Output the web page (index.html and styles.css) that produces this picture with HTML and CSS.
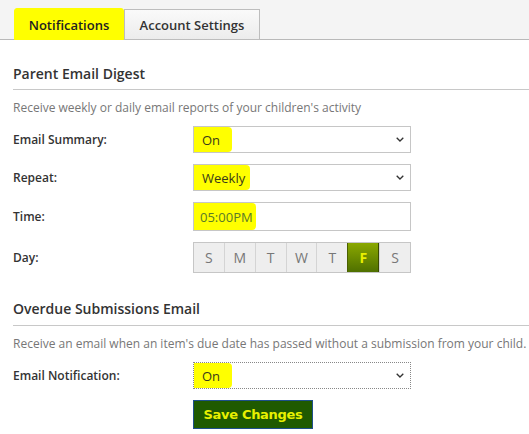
FILE: index.html
```html
<!DOCTYPE html>
<html>
<head>
<meta charset="utf-8">
<link rel="stylesheet" href="styles.css">
</head>
<body>
<div class="tabbar">
  <div class="tab active">Notifications</div>
  <div class="tab">Account Settings</div>
</div>
<div class="content">
  <h2 class="section-title">Parent Email Digest</h2>
  <p class="desc">Receive weekly or daily email reports of your children's activity</p>
  <div class="row">
    <label class="label">Email Summary:</label>
    <div class="select"><span class="hl hl-on">On</span><svg class="chev" viewBox="0 0 8 5" width="8" height="5"><path d="M0.7 0.7 L4 4 L7.3 0.7" fill="none" stroke="#333" stroke-width="1.3"/></svg></div>
  </div>
  <div class="row">
    <label class="label">Repeat:</label>
    <div class="select"><span class="hl hl-weekly">Weekly</span><svg class="chev" viewBox="0 0 8 5" width="8" height="5"><path d="M0.7 0.7 L4 4 L7.3 0.7" fill="none" stroke="#333" stroke-width="1.3"/></svg></div>
  </div>
  <div class="row">
    <label class="label">Time:</label>
    <div class="input"><span class="hl hl-time">05:00PM</span></div>
  </div>
  <div class="row">
    <label class="label">Day:</label>
    <div class="days">
      <span class="day">S</span><span class="day">M</span><span class="day">T</span><span class="day">W</span><span class="day">T</span><span class="day on">F</span><span class="day">S</span>
    </div>
  </div>

  <h2 class="section-title second">Overdue Submissions Email</h2>
  <p class="desc">Receive an email when an item's due date has passed without a submission from your child.</p>
  <div class="row">
    <label class="label">Email Notification:</label>
    <div class="select focus"><span class="hl hl-on">On</span><svg class="chev" viewBox="0 0 8 5" width="8" height="5"><path d="M0.7 0.7 L4 4 L7.3 0.7" fill="none" stroke="#333" stroke-width="1.3"/></svg></div>
  </div>
  <div class="row">
    <span class="label"></span>
    <button class="save">Save Changes</button>
  </div>
</div>
</body>
</html>
```
FILE: styles.css
```css
html, body {
  margin: 0;
  padding: 0;
  background: #fff;
  font-family: "Open Sans", "Noto Sans", sans-serif;
  color: #333;
}
.tabbar {
  height: 39px;
  background: #f4f4f4;
  border-bottom: 1px solid #b9b9b9;
  display: flex;
  align-items: flex-end;
  padding-left: 14px;
}
.tab {
  height: 31px;
  margin-bottom: -1px;
  box-sizing: border-box;
  font-size: 13px;
  font-weight: 600;
  color: #333;
  display: flex;
  align-items: center;
  justify-content: center;
  border: 1px solid #bdbdbd;
  background: linear-gradient(#fafafa, #ececec);
  width: 136px;
}
.tab.active {
  background: #ffff00;
  border-color: #ffff00;
  width: 110px;
  height: 32px;
  border-radius: 3px 3px 0 0;
  color: #222;
  padding-top: 2px;
}
.content {
  padding-left: 13px;
}
.section-title {
  margin: 0;
  font-size: 14px;
  font-weight: 600;
  color: #333;
  padding-top: 24px;
  padding-bottom: 5px;
  border-bottom: 1px solid #c8c8c8;
  line-height: 20px;
}
.section-title.second {
  padding-top: 26px;
  padding-bottom: 6px;
}
.desc {
  margin: 0;
  padding-top: 10px;
  font-size: 12px;
  color: #777;
  line-height: 16px;
  white-space: nowrap;
}
.row {
  display: flex;
  align-items: center;
  margin-top: 11px;
}
.desc + .row {
  margin-top: 10px;
}
.label {
  width: 180px;
  font-size: 12px;
  font-weight: 600;
  color: #333;
}
.select, .input {
  width: 218px;
  height: 27px;
  box-sizing: border-box;
  border: 1px solid #c6c6c6;
  background: #fff;
  display: flex;
  align-items: stretch;
  justify-content: space-between;
  position: relative;
}
.input {
  height: 29px;
}
.select.focus {
  border: 1px dotted #888;
}
.hl {
  background: #ffff00;
  font-size: 13px;
  color: #3a3a1a;
  display: flex;
  align-items: center;
  padding-left: 8px;
  border-radius: 0 4px 4px 0;
}
.hl-on { width: 30px; }
.hl-weekly { width: 48px; }
.hl-time { width: 56px; padding-left: 6px; color: #5a7a2a; }
.chev {
  align-self: center;
  margin-right: 6px;
}
.days {
  display: flex;
  width: 218px;
  height: 31px;
  box-sizing: border-box;
  border: 1px solid #c6c6c6;
  background: #eeeeee;
}
.day {
  flex: 1;
  display: flex;
  align-items: center;
  justify-content: center;
  font-size: 14px;
  color: #777;
  border-left: 1px solid #d4d4d4;
}
.day:first-child { border-left: none; }
.day.on {
  background: linear-gradient(#8aa800, #4f7000);
  color: #e8f000;
  font-weight: 700;
  border-left: 1px solid #4a6000;
  border-right: 1px solid #3a4a00;
}
.save {
  margin-top: 0;
  height: 29px;
  width: 120px;
  background: #1f5a00;
  border: 1px solid #1e4f8a;
  color: #e8f000;
  font-family: "DejaVu Sans", Verdana, sans-serif;
  font-weight: 700;
  font-size: 13px;
  padding: 0;
  letter-spacing: -0.3px;
}
```
